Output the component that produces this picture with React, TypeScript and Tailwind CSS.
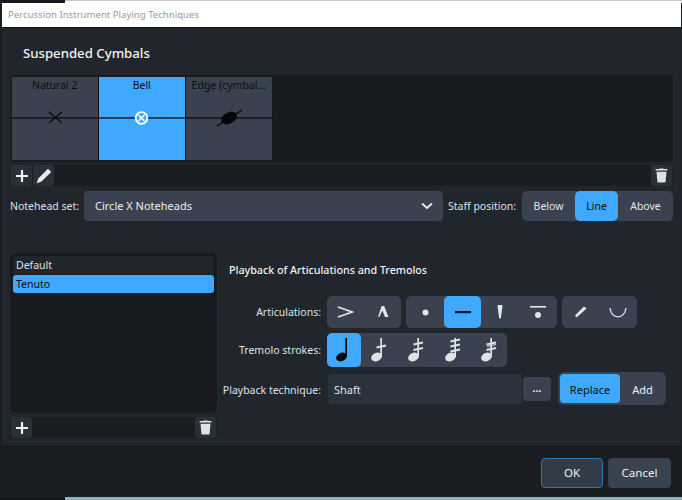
import type { ReactNode } from "react";

const FONT = "font-['Noto_Sans','Open_Sans',sans-serif]";

function Note({ strokes = 0, slash = false, color = "#e0e3e6" }: { strokes?: number; slash?: boolean; color?: string }) {
  const ys = strokes === 1 ? [10.5] : strokes === 2 ? [7.5, 13] : strokes === 3 ? [4.5, 9.5, 14.5] : [];
  return (
    <svg width="20" height="28" viewBox="0 0 20 28">
      <ellipse cx="7.5" cy="21" rx="5.6" ry="4.2" fill={color} transform="rotate(-24 7.5 21)" />
      <rect x="11.3" y="2" width="1.7" height="19" fill={color} />
      {ys.map((y) => (
        <path key={y} d={`M7.5 ${y + 1}L17 ${y - 1}`} stroke={color} strokeWidth="1.8" />
      ))}
      {slash && <path d="M8 10.5L17 8.5" stroke={color} strokeWidth="1.1" />}
    </svg>
  );
}

function Seg({ active, w, children }: { active?: boolean; w: string; children: ReactNode }) {
  return (
    <div
      className={`${w} flex h-full items-center justify-center rounded-[5px] ${
        active ? "bg-[#3fa9ff] text-[#0b1016]" : "text-[#e3e6ea]"
      }`}
    >
      {children}
    </div>
  );
}

function Trash() {
  return (
    <svg width="13" height="15" viewBox="0 0 14 15" fill="#dfe2e5">
      <rect x="0.5" y="0.6" width="13" height="1.6" rx="0.5" />
      <path d="M4.5 0.6L5 0H9L9.5 0.6Z" />
      <path d="M1.6 3.4H12.4L11.4 14.2Q11.3 15 10.4 15H3.6Q2.7 15 2.6 14.2Z" />
    </svg>
  );
}

function Plus() {
  return (
    <svg width="14" height="14" viewBox="0 0 14 14">
      <path d="M7 1V13M1 7H13" stroke="#f0f2f4" strokeWidth="2.2" />
    </svg>
  );
}

function ToolBtn({ children }: { children: ReactNode }) {
  return <div className="flex h-[21px] w-[21px] items-center justify-center rounded-[3px] bg-[#2a3037]">{children}</div>;
}

function Cell({ label, active, children }: { label: string; active?: boolean; children: ReactNode }) {
  return (
    <div className={`relative h-full w-[85.5px] text-center text-[10.5px] leading-[15px] text-[#0b0e12] ${active ? "bg-[#3fa9ff]" : "bg-[#39424e]"}`}>
      <div className="truncate px-[2px] pt-[1px]">{label}</div>
      <svg className="absolute inset-0" width="87" height="83" viewBox="0 0 87 83">
        <rect x="-1" y="40.3" width="89" height="1.3" fill="#0b0e12" />
        {children}
      </svg>
    </div>
  );
}

export default function App() {
  return (
    <div className={`${FONT} flex h-[500px] w-[682px] flex-col overflow-hidden bg-[#1a1e23] text-[10.5px] text-[#dfe3e7]`}>
      <div className="flex h-[3px] shrink-0">
        <div className="w-[65px] bg-[#15181c]" />
        <div className="flex-1 border-t border-[#c9c9c9] bg-white" />
      </div>
      <div className="ml-[2px] mr-[1px] flex h-[25px] shrink-0 items-center border-b border-[#101214] bg-white pl-[6px] text-[9.6px] text-[#9b9b9b]">
        Percussion Instrument Playing Techniques
      </div>

      <div className="ml-[2px] mr-[1px] flex min-h-0 flex-1 flex-col bg-[#20262b] pl-[8px] pr-[8px]">
        <div className="h-[47px] shrink-0 pl-[13px] pt-[15px] text-[13.2px] font-medium leading-[20px] text-[#f1f3f5]">Suspended Cymbals</div>

        <div className="ml-[1px] flex h-[87px] shrink-0 items-center rounded-[4px] bg-[#171b1f] pl-[1px]">
          <div className="flex h-[83px] gap-[1.5px] bg-[#0d1014]">
            <Cell label="Natural 2">
              <path d="M37 35L50 46M50 35L37 46" stroke="#0b0e12" strokeWidth="1.4" fill="none" />
            </Cell>
            <Cell label="Bell" active>
              <circle cx="42.5" cy="41" r="5.8" fill="#3fa9ff" stroke="#fff" strokeWidth="1.8" />
              <path d="M39.5 38L45.5 44M45.5 38L39.5 44" stroke="#fff" strokeWidth="1.5" />
            </Cell>
            <Cell label="Edge (cymbal...">
              <ellipse cx="43" cy="41" rx="8.5" ry="5.6" fill="#06080b" transform="rotate(-28 43 41)" />
              <path d="M31 49L56 33" stroke="#06080b" strokeWidth="1.3" />
            </Cell>
          </div>
        </div>

        <div className="ml-[1px] mt-[3px] flex h-[21px] shrink-0 items-center justify-between bg-[#1a1e22]">
          <div className="flex gap-[1px]">
            <ToolBtn><Plus /></ToolBtn>
            <ToolBtn>
              <svg width="16" height="16" viewBox="0 0 16 16" fill="#e8ebee">
                <path d="M12 0.8L15.2 4L5.5 13.6L0.8 15.2L2.3 10.5Z" />
              </svg>
            </ToolBtn>
          </div>
          <div className="pr-[1px]"><ToolBtn><Trash /></ToolBtn></div>
        </div>

        <div className="mt-[5px] flex h-[30px] shrink-0 items-center">
          <span className="w-[74px] pt-[2px]">Notehead set:</span>
          <div className="flex h-full w-[359px] items-center justify-between rounded-[4px] bg-[#39424e] pl-[11px] pr-[10px] text-[11px] text-[#eef0f2]">
            <span className="pt-[1px]">Circle X Noteheads</span>
            <svg width="12" height="8" viewBox="0 0 12 8" fill="none">
              <path d="M1 1.5L6 6L11 1.5" stroke="#eef0f2" strokeWidth="1.7" />
            </svg>
          </div>
          <span className="ml-[5px] w-[74px] pt-[2px]">Staff position:</span>
          <div className="flex h-full w-[151px] rounded-[5px] bg-[#39424e]">
            <Seg w="w-[53px]"><span className="pt-[1px]">Below</span></Seg>
            <Seg w="w-[43px]" active><span className="pt-[1px]">Line</span></Seg>
            <Seg w="w-[55px]"><span className="pt-[1px]">Above</span></Seg>
          </div>
        </div>

        <div className="mt-[32px] flex min-h-0 shrink-0">
          <div className="w-[207px] shrink-0">
            <div className="h-[160px] rounded-[6px] bg-[#171b1f] px-[3px] pt-[3px]">
              <div className="flex h-[18px] items-center rounded-[2px] bg-[#20262b] pl-[3px] pt-[1px]">Default</div>
              <div className="mt-[1px] flex h-[18px] items-center rounded-[3px] bg-[#3fa9ff] pl-[3px] pt-[1px] text-[#0b1016]">Tenuto</div>
            </div>
            <div className="mt-[4px] flex h-[21px] items-center justify-between rounded-[3px] bg-[#1a1e22] px-[1px]">
              <ToolBtn><Plus /></ToolBtn>
              <ToolBtn><Trash /></ToolBtn>
            </div>
          </div>

          <div className="ml-[5px] min-w-0 flex-1">
            <div className="ml-[7px] mt-[9px] h-[34px] text-[10.7px] font-medium leading-[17px] text-[#f1f3f5]">Playback of Articulations and Tremolos</div>

            <div className="flex h-[32px] items-center">
              <span className="w-[99px] pt-[2px] text-right">Articulations:</span>
              <div className="ml-[6px] flex h-full w-[74px] rounded-[5px] bg-[#39424e]">
                <Seg w="w-[37px]">
                  <svg width="17" height="12" viewBox="0 0 17 12" fill="none"><path d="M1 1L15 6L1 11" stroke="#e3e6ea" strokeWidth="1.6" /></svg>
                </Seg>
                <Seg w="w-[37px]">
                  <svg width="12" height="12" viewBox="0 0 12 12" fill="#e3e6ea"><path d="M4.6 0H7.2L11.5 11H8L5.4 4.4L2.2 11H1Z" /></svg>
                </Seg>
              </div>
              <div className="ml-[5px] flex h-full w-[151px] rounded-[5px] bg-[#39424e]">
                <Seg w="w-[38px]">
                  <svg width="7" height="7" viewBox="0 0 7 7"><circle cx="3.5" cy="3.5" r="3" fill="#e3e6ea" /></svg>
                </Seg>
                <Seg w="w-[37px]" active>
                  <svg width="16" height="3" viewBox="0 0 16 3"><rect width="16" height="2.2" fill="#0b1016" /></svg>
                </Seg>
                <Seg w="w-[38px]">
                  <svg width="6" height="14" viewBox="0 0 6 14" fill="#e3e6ea"><path d="M0.5 1Q0.5 0 1.5 0H4.5Q5.5 0 5.5 1L3.8 13.5H2.2Z" /></svg>
                </Seg>
                <Seg w="w-[38px]">
                  <svg width="16" height="13" viewBox="0 0 16 13" fill="#e3e6ea"><rect width="16" height="1.6" /><circle cx="8" cy="9" r="3" /></svg>
                </Seg>
              </div>
              <div className="ml-[5px] flex h-full w-[75px] rounded-[5px] bg-[#39424e]">
                <Seg w="w-[37px]">
                  <svg width="12" height="12" viewBox="0 0 12 12" fill="#e3e6ea"><path d="M11.5 2.5L1.5 11.5L0 9.5L9 0.5Z" /></svg>
                </Seg>
                <Seg w="w-[38px]">
                  <svg width="18" height="11" viewBox="0 0 18 11" fill="none"><path d="M1 1C2 7 5.5 9.8 9 9.8S16 7 17 1" stroke="#e3e6ea" strokeWidth="1.3" /></svg>
                </Seg>
              </div>
            </div>

            <div className="mt-[5px] flex h-[34px] items-center">
              <span className="w-[99px] whitespace-nowrap pt-[2px] text-right">Tremolo strokes:</span>
              <div className="ml-[6px] flex h-full w-[180px] rounded-[5px] bg-[#39424e]">
                <Seg w="w-[34px]" active><Note color="#06090d" /></Seg>
                <Seg w="w-[36px]"><Note strokes={1} /></Seg>
                <Seg w="w-[37px]"><Note strokes={2} /></Seg>
                <Seg w="w-[37px]"><Note strokes={3} /></Seg>
                <Seg w="w-[36px]"><Note strokes={2} slash /></Seg>
              </div>
            </div>

            <div className="mt-[5px] flex h-[33px] items-center">
              <span className="w-[99px] whitespace-nowrap pt-[4px] text-right">Playback technique:</span>
              <div className="ml-[7px] flex h-[30px] w-[194px] items-center rounded-[4px] bg-[#2b323b] pl-[6px] pt-[3px] text-[11px]">Shaft</div>
              <div className="ml-[1px] flex h-[24px] w-[28px] items-center justify-center rounded-[4px] bg-[#39424e] font-bold text-[#eef0f2]">...</div>
              <div className="ml-[7px] flex h-full w-[108px] items-center rounded-[6px] bg-[#39424e] pl-[2px] text-[11px]">
                <div className="flex h-[29px] w-[60px] items-center justify-center rounded-[4px] bg-[#3fa9ff] pt-[3px] text-[#0b1016]">Replace</div>
                <div className="flex-1 pr-[1px] pt-[3px] text-center text-[#eef0f2]">Add</div>
              </div>
            </div>
          </div>
        </div>
      </div>

      <div className="ml-[2px] mr-[1px] flex h-[51px] shrink-0 items-start justify-end gap-[5px] border-t border-[#111417] bg-[#1a1e23] pr-[10px] pt-[11px]">
        <div className="flex h-[30px] w-[62px] items-center justify-center rounded-[4px] border-[1.5px] border-[#2b78b8] bg-[#323b46] text-[11.5px] text-[#eef0f2]">OK</div>
        <div className="flex h-[30px] w-[63px] items-center justify-center rounded-[4px] bg-[#39424e] text-[11.5px] text-[#eef0f2]">Cancel</div>
      </div>

      <div className="flex h-[3px] shrink-0">
        <div className="w-[65px] bg-[#15181c]" />
        <div className="flex-1 bg-[#8fb3b8]" />
      </div>
    </div>
  );
}
